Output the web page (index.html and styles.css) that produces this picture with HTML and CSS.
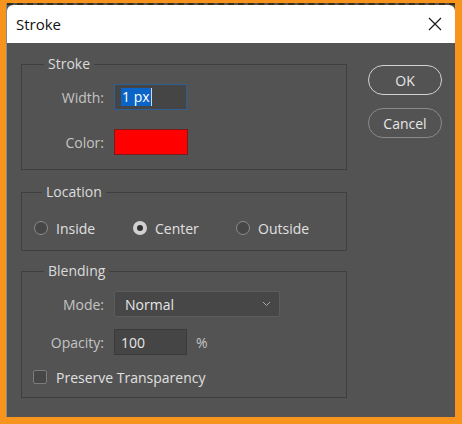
FILE: index.html
```html
<!DOCTYPE html>
<html lang="en">
<head>
<meta charset="UTF-8">
<title>Stroke</title>
<link rel="stylesheet" href="styles.css">
</head>
<body>

<div class="dialog">
    <!-- Title bar -->
    <div class="titlebar">
        <span class="title">Stroke</span>
        <svg class="close" width="14" height="14" viewBox="0 0 14 14">
            <path d="M1 1 L13 13 M13 1 L1 13" stroke="#1a1a1a" stroke-width="1.2" fill="none"/>
        </svg>
    </div>

    <div class="content">
        <div class="groups">
            <fieldset class="group group-stroke">
                <legend>Stroke</legend>
                <div class="row">
                    <span class="label">Width:</span>
                    <div class="field field-focus"><span class="sel">1 px</span><span class="caret"></span></div>
                </div>
                <div class="row">
                    <span class="label">Color:</span>
                    <div class="swatch"></div>
                </div>
            </fieldset>

            <fieldset class="group group-location">
                <legend>Location</legend>
                <div class="radios">
                    <label class="radio"><span class="dot"></span>Inside</label>
                    <label class="radio"><span class="dot on"></span>Center</label>
                    <label class="radio"><span class="dot"></span>Outside</label>
                </div>
            </fieldset>

            <fieldset class="group group-blending">
                <legend>Blending</legend>
                <div class="row">
                    <span class="label">Mode:</span>
                    <div class="select">
                        <span>Normal</span>
                        <svg width="9" height="6" viewBox="0 0 9 6">
                            <path d="M1 1 L4.5 4.5 L8 1" stroke="#a8a8a8" stroke-width="1" fill="none"/>
                        </svg>
                    </div>
                </div>
                <div class="row">
                    <span class="label">Opacity:</span>
                    <div class="field">100</div>
                    <span class="unit">%</span>
                </div>
                <label class="check"><span class="box"></span>Preserve Transparency</label>
            </fieldset>
        </div>

        <div class="buttons">
            <div class="btn btn-ok">OK</div>
            <div class="btn">Cancel</div>
        </div>
    </div>
</div>

</body>
</html>
```

FILE: styles.css
```css
body {
    margin: 0;
    height: 424px;
    background: #f7941d;
    font-family: 'Open Sans', 'Noto Sans', sans-serif;
    font-size: 14px;
    overflow: hidden;
    padding: 3px 0 0 7px;
    box-sizing: border-box;
}

.dialog {
    width: 448px;
    height: 414px;
    background: #535353;
    border-top: 2px dashed #3b2c14;
    box-sizing: border-box;
    box-shadow: -1px 0 0 #8a8a8a;
}

/* Title bar */
.titlebar {
    height: 38px;
    background: #fff;
    border-top-left-radius: 6px;
    border-top-right-radius: 6px;
    display: flex;
    align-items: center;
    justify-content: space-between;
    padding: 0 13px 0 9px;
}
.title {
    font-size: 15px;
    color: #111;
}
.close {
    display: block;
}

.content {
    display: flex;
    padding: 11px 0 0 14px;
    gap: 21px;
}
.groups {
    width: 326px;
}

/* Group boxes */
.group {
    margin: 0;
    border: 1px solid #3f3f3f;
    padding: 0;
    min-width: 0;
}
.group legend {
    margin-left: 22px;
    padding: 0 4px;
    line-height: 20px;
    color: #dcdcdc;
}
.group-stroke {
    padding: 10px 0 14px;
}
.group-location {
    margin-top: 12px;
    padding: 16px 0 12px;
}
.group-location legend {
    margin-left: 20px;
}
.group-blending {
    margin-top: 10px;
    padding: 10px 0 10px;
}

.row {
    display: flex;
    align-items: center;
    margin-bottom: 12px;
}
.group-stroke .row {
    margin-bottom: 19px;
}
.group-stroke .row:last-child {
    margin-bottom: 0;
}
.label {
    width: 82px;
    text-align: right;
    margin-right: 10px;
    color: #c4c4c4;
}

.field {
    width: 73px;
    height: 26px;
    box-sizing: border-box;
    background: #454545;
    border: 1px solid #3a3a3a;
    color: #e6e6e6;
    padding-left: 6px;
    display: flex;
    align-items: center;
}
.field-focus {
    border-color: #2f5f91;
}
.sel {
    background: #0a64c8;
    color: #fff;
    line-height: 18px;
    padding: 0 1px;
}
.caret {
    width: 1px;
    height: 18px;
    background: #d8d8d8;
}

.swatch {
    width: 74px;
    height: 26px;
    box-sizing: border-box;
    background: #ff0000;
    border: 1px solid #7a1a1a;
}

.select {
    width: 166px;
    height: 26px;
    box-sizing: border-box;
    background: #474747;
    border: 1px solid #5c5c5c;
    border-radius: 2px;
    color: #e6e6e6;
    padding: 0 8px 0 10px;
    display: flex;
    align-items: center;
    justify-content: space-between;
}
.unit {
    margin-left: 9px;
    color: #c4c4c4;
}

/* Radios */
.radios {
    display: grid;
    grid-template-columns: 99px 103px auto;
    height: 20px;
    align-items: center;
    padding-left: 12px;
}
.radio {
    display: flex;
    align-items: center;
    color: #e0e0e0;
}
.dot {
    width: 14px;
    height: 14px;
    box-sizing: border-box;
    border-radius: 50%;
    border: 1px solid #8c8c8c;
    background: #474747;
    margin-right: 8px;
}
.dot.on {
    border: 4px solid #d0d0d0;
    background: #303030;
}

/* Checkbox */
.check {
    display: flex;
    align-items: center;
    height: 20px;
    margin-top: 8px;
    padding-left: 11px;
    color: #e0e0e0;
}
.box {
    width: 14px;
    height: 14px;
    box-sizing: border-box;
    border: 1px solid #7c7c7c;
    border-radius: 2px;
    background: #474747;
    margin-right: 9px;
}

/* Buttons */
.buttons {
    display: flex;
    flex-direction: column;
    gap: 13px;
    padding-top: 11px;
}
.btn {
    width: 74px;
    height: 30px;
    box-sizing: border-box;
    border: 1px solid #8a8a8a;
    border-radius: 15px;
    color: #e6e6e6;
    display: flex;
    align-items: center;
    justify-content: center;
}
.btn-ok {
    border-color: #d2d2d2;
}
```
